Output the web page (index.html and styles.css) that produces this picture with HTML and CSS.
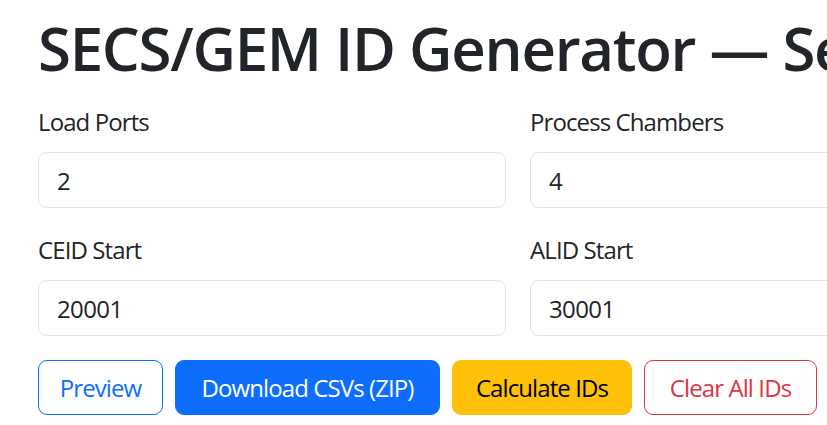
FILE: index.html
```html
<!DOCTYPE html>
<html lang="en">
<head>
<meta charset="utf-8">
<title>SECS/GEM ID Generator</title>
<link rel="stylesheet" href="styles.css">
</head>
<body>
<main class="page">
  <h1 class="title">SECS/GEM ID Generator — Semi Equipment</h1>
  <div class="grid">
    <div class="field">
      <label class="label" for="lp">Load Ports</label>
      <input class="input" id="lp" type="text" value="2">
    </div>
    <div class="field">
      <label class="label" for="pc">Process Chambers</label>
      <input class="input" id="pc" type="text" value="4">
    </div>
    <div class="field">
      <label class="label" for="ceid">CEID Start</label>
      <input class="input" id="ceid" type="text" value="20001">
    </div>
    <div class="field">
      <label class="label" for="alid">ALID Start</label>
      <input class="input" id="alid" type="text" value="30001">
    </div>
  </div>
  <div class="actions">
    <button class="btn btn-outline-primary btn-preview">Preview</button>
    <button class="btn btn-primary btn-download">Download CSVs (ZIP)</button>
    <button class="btn btn-warning btn-calc">Calculate IDs</button>
    <button class="btn btn-outline-danger btn-clear">Clear All IDs</button>
  </div>
</main>
</body>
</html>
```

FILE: styles.css
```css
html, body {
  margin: 0;
  padding: 0;
  background: #fff;
  overflow: hidden;
}
body {
  font-family: "Open Sans", "Noto Sans", sans-serif;
  color: #212529;
  font-size: 24px;
  line-height: 1.5;
}
.page {
  width: 1200px;
  padding: 12px 0 0 38px;
}
.title {
  margin: 0 0 20px 0;
  font-size: 60px;
  font-weight: 600;
  line-height: 72px;
  letter-spacing: -1.3px;
  white-space: nowrap;
}
.grid {
  display: grid;
  grid-template-columns: 468px 468px;
  column-gap: 24px;
}
.field {
  display: flex;
  flex-direction: column;
  margin-bottom: 24px;
}
.label {
  display: block;
  font-size: 24px;
  line-height: 36px;
  margin-bottom: 12px;
  letter-spacing: -0.9px;
}
.input {
  box-sizing: border-box;
  height: 56px;
  margin: 0;
  padding: 0 18px;
  border: 1px solid #dee2e6;
  border-radius: 9px;
  font-family: inherit;
  font-size: 24px;
  color: #212529;
  letter-spacing: -0.6px;
  background: #fff;
  outline: none;
}
.actions {
  display: flex;
  gap: 12px;
}
.btn {
  box-sizing: border-box;
  height: 55px;
  padding: 0;
  border: 1px solid transparent;
  border-radius: 9px;
  font-family: inherit;
  font-size: 24px;
  letter-spacing: -0.9px;
  background: #fff;
  white-space: nowrap;
  text-align: center;
}
.btn-preview { width: 125px; }
.btn-download { width: 265px; }
.btn-calc { width: 180px; }
.btn-clear { width: 173px; }
.btn-outline-primary {
  color: #0d6efd;
  border-color: #0d6efd;
}
.btn-primary {
  color: #fff;
  background: #0d6efd;
  border-color: #0d6efd;
}
.btn-warning {
  color: #000;
  background: #ffc107;
  border-color: #ffc107;
}
.btn-outline-danger {
  color: #dc3545;
  border-color: #dc3545;
}
```
